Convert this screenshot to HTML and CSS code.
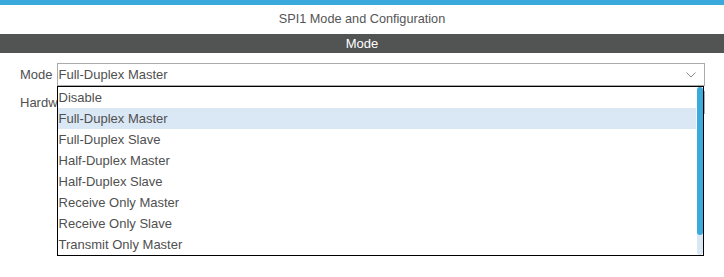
FILE: index.html
```html
<!DOCTYPE html>
<html lang="en">
<head>
  <meta charset="UTF-8" />
  <title>SPI1 Mode and Configuration</title>
  <link rel="stylesheet" href="styles.css">
</head>
<body>
  <div class="top-bar"></div>
  <div class="panel-title">SPI1 Mode and Configuration</div>
  <div class="section-head">Mode</div>

  <div class="form">
    <div class="row">
      <span class="label">Mode</span>
      <div class="select open">
        <span class="value">Full-Duplex Master</span>
        <svg class="chevron" width="10" height="6" viewBox="0 0 10 6">
          <path d="M0.5 0.5 L5 5 L9.5 0.5" fill="none" stroke="#8a8a8a" stroke-width="1" />
        </svg>

        <div class="listbox">
          <ul class="options">
            <li>Disable</li>
            <li class="selected">Full-Duplex Master</li>
            <li>Full-Duplex Slave</li>
            <li>Half-Duplex Master</li>
            <li>Half-Duplex Slave</li>
            <li>Receive Only Master</li>
            <li>Receive Only Slave</li>
            <li>Transmit Only Master</li>
          </ul>
          <div class="scroll-track">
            <div class="scroll-thumb"></div>
          </div>
        </div>
      </div>
    </div>

    <div class="row">
      <span class="label">Hardware NSS Signal</span>
      <div class="select">
        <span class="value">Disable</span>
      </div>
    </div>
  </div>
</body>
</html>
```

FILE: styles.css
```css
* {
  box-sizing: border-box;
  margin: 0;
  padding: 0;
}

html, body {
  height: 100%;
}

body {
  min-height: 277px;
  background: #fff;
  font-family: 'Liberation Sans', Arial, sans-serif;
  font-size: 13px;
  color: #505050;
}

.top-bar {
  height: 5px;
  background: #3aa9dc;
}

.panel-title {
  height: 29px;
  line-height: 29px;
  text-align: center;
  font-size: 12.7px;
  color: #555;
}

.section-head {
  height: 19px;
  line-height: 19px;
  background: #525453;
  color: #fff;
  text-align: center;
}

.form {
  padding: 10px 19px 0 20px;
}

.row {
  display: flex;
  align-items: center;
  height: 23px;
  margin-bottom: 5px;
}

.label {
  white-space: nowrap;
  margin-right: 4px;
}

.select {
  position: relative;
  flex: 1;
  height: 23px;
  border: 1px solid #ababab;
  display: flex;
  align-items: center;
  justify-content: space-between;
  padding: 0 8px 0 1px;
}

.chevron {
  display: block;
}

/* open dropdown list lies over the rows below */
.listbox {
  position: absolute;
  top: 22px;
  left: -1px;
  right: 0;
  z-index: 10;
  display: flex;
  background: #fff;
  border: 1px solid #000;
}

.options {
  flex: 1;
  list-style: none;
}

.options li {
  height: 21px;
  line-height: 21px;
  padding-left: 1px;
}

.options li.selected {
  background: #dae7f4;
}

.scroll-track {
  width: 6px;
  margin-left: 1px;
  background: #dae7f4;
  border-radius: 3px;
}

.scroll-thumb {
  height: 148px;
  background: #3aa9dc;
  border-radius: 3px;
}
```
